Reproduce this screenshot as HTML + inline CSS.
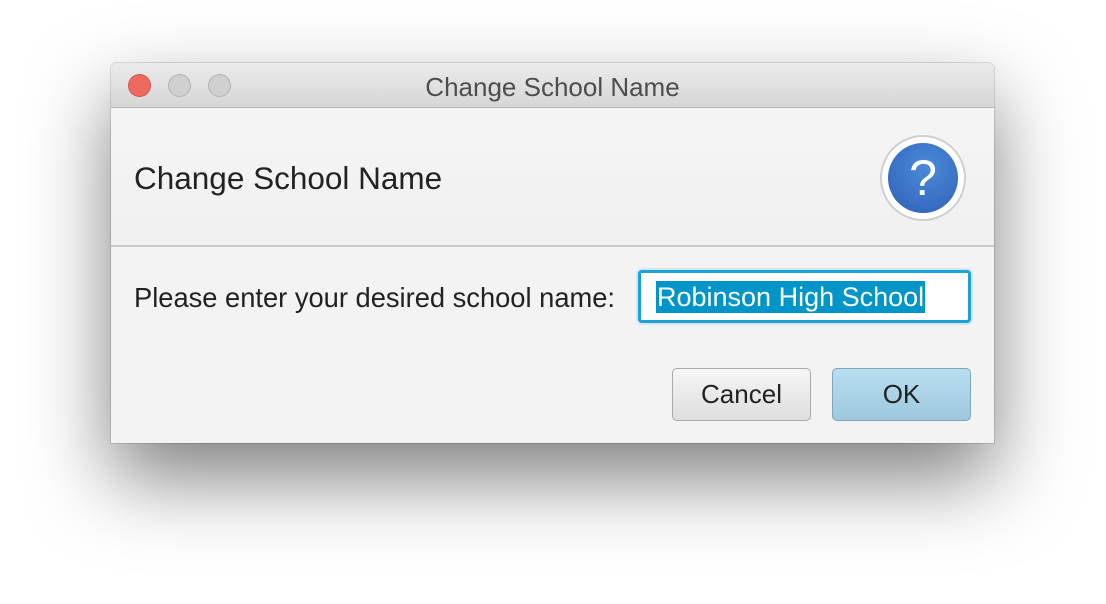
<!DOCTYPE html>
<html><head><style>
body{margin:0;width:1106px;height:604px;background:#fff;font-family:"Liberation Sans",sans-serif;position:relative;overflow:hidden}
.win{position:absolute;left:111px;top:63px;width:883px;height:380px;background:#f3f3f3;border-radius:6px 6px 0 0;box-shadow:0 35px 80px rgba(0,0,0,.5),0 0 0 1px rgba(0,0,0,.12);overflow:hidden}
.tb{position:absolute;left:0;top:0;width:100%;height:44px;background:linear-gradient(#ebebeb,#d6d6d6);border-bottom:1px solid #b8b8b8;text-align:center;line-height:48px;font-size:26px;color:#4d4d4d}
.dot{position:absolute;top:11px;width:23px;height:23px;border-radius:50%;box-sizing:border-box}
.hd{position:absolute;left:0;top:45px;width:100%;height:137px;background:linear-gradient(#f5f5f5,#f0f0f0);border-bottom:2px solid #c9c9c9}
.t{position:absolute;color:#222}
.btn{position:absolute;top:305px;width:139px;height:53px;box-sizing:border-box;border-radius:5px;font-size:26px;text-align:center;line-height:51px;color:#222}
</style></head><body>
<div class="win">
<div class="tb">Change School Name
<div class="dot" style="left:17px;background:#ec6b5e;border:1px solid #d3574b"></div>
<div class="dot" style="left:57px;background:#d0d0d0;border:1px solid #b5b5b5"></div>
<div class="dot" style="left:97px;background:#d0d0d0;border:1px solid #b5b5b5"></div>
</div>
<div class="hd">
<div class="t" style="left:23px;top:52px;font-size:31.5px">Change School Name</div>
<div style="position:absolute;left:769px;top:27px;width:86px;height:86px;border-radius:50%;background:#fff;border:2px solid #cfcfcf;box-sizing:border-box"></div>
<div style="position:absolute;left:777px;top:35px;width:70px;height:70px;border-radius:50%;background:radial-gradient(circle at 55% 35%,#4a8ad8,#2f5fb8);color:#fff;font-size:50px;text-align:center;line-height:70px">?</div>
</div>
<div class="t" style="left:23px;top:219px;font-size:27.3px">Please enter your desired school name:</div>
<div style="position:absolute;left:527px;top:207px;width:333px;height:53px;box-sizing:border-box;border:3px solid #1ea0d8;border-radius:4px;background:#fff;box-shadow:0 0 0 2px #cfe8f4">
<span style="position:absolute;left:15px;top:8px;height:32px;padding:0 1px;background:#0095c8;color:#fff;font-size:27px;line-height:32px">Robinson High School</span></div>
<div class="btn" style="left:561px;background:linear-gradient(#f6f6f6,#dedede);border:1px solid #a9a9a9">Cancel</div>
<div class="btn" style="left:721px;background:linear-gradient(#b9def0,#9dc8dd);border:1px solid #7fa6bb">OK</div>
</div>
</body></html>
